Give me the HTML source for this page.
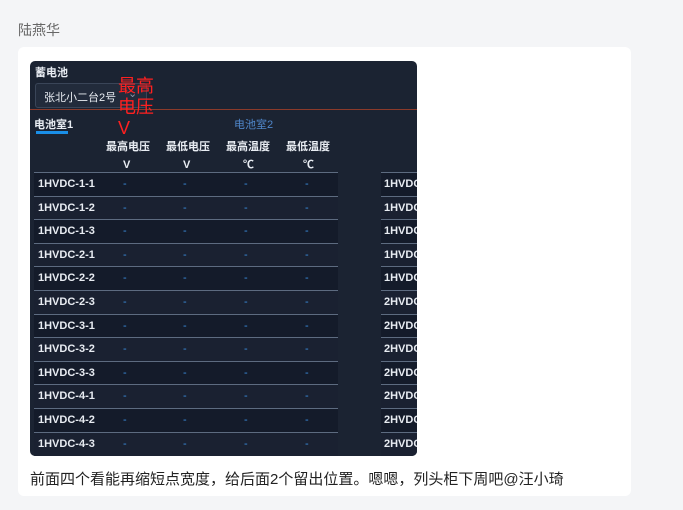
<!DOCTYPE html>
<html><head><meta charset="utf-8"><style>
body{margin:0;width:683px;height:510px;background:#f4f5f7;font-family:"Liberation Sans","Noto Sans CJK SC",sans-serif;position:relative;overflow:hidden}
.name{position:absolute;left:18px;top:20px;font-size:14px;color:#666}
.card{position:absolute;left:18px;top:47px;width:613px;height:449px;background:#fff;border-radius:6px}
.img{position:absolute;left:30px;top:61px;width:387px;height:395px;background:#1b2332;border-radius:5px;overflow:hidden;color:#e8ecf2;font-size:11px}
.abs{position:absolute}
.row{position:absolute;left:4px;width:304px;height:23px;border-top:1.5px solid #5d6b80;font-weight:bold;font-size:11px}
.row span{position:absolute;top:5px}
.d{color:#3b8ee0;font-weight:normal}
.r2{position:absolute;left:351px;width:40px;height:23px;border-top:1.5px solid #5d6b80;font-weight:bold;font-size:11px;overflow:hidden}
.r2 span{position:absolute;top:5px;left:3px}
.txt{position:absolute;left:30px;top:468px;font-size:15px;color:#222}
</style></head><body>
<div class="name">陆燕华</div>
<div class="card"></div>
<div class="img">
<div class="abs" style="left:5px;top:3px;font-weight:bold">蓄电池</div>
<div class="abs" style="left:5px;top:22px;width:110px;height:23px;border:1px solid #3a4558;border-radius:3px;background:#222b3b"><span style="position:absolute;left:8px;top:5px">张北小二台2号</span><span style="position:absolute;left:92px;top:3px;color:#8a94a6">⌄</span></div>
<div class="abs" style="left:0;top:48px;width:387px;height:1px;background:#8b3a2a"></div>
<div class="abs" style="left:88px;top:15px;color:#ff2020;font-size:18px;line-height:21px">最高<br>电压<br>V</div>
<div class="abs" style="left:4px;top:55px;font-weight:bold">电池室1</div>
<div class="abs" style="left:6px;top:70px;width:32px;height:3px;background:#1a8fe8"></div>
<div class="abs" style="left:204px;top:55px;color:#4f86c9">电池室2</div>
<div class="abs" style="left:76px;top:78px;width:240px;line-height:17px;font-weight:bold">
<span class="abs" style="left:0">最高电压</span><span class="abs" style="left:60px">最低电压</span><span class="abs" style="left:120px">最高温度</span><span class="abs" style="left:180px">最低温度</span>
<span class="abs" style="left:17px;top:18px">V</span><span class="abs" style="left:77px;top:18px">V</span><span class="abs" style="left:137px;top:18px">℃</span><span class="abs" style="left:197px;top:18px">℃</span></div>
<div id="rows"></div>
</div>
<div class="txt">前面四个看能再缩短点宽度，给后面2个留出位置。嗯嗯，列头柜下周吧@汪小琦</div>
<script>
var names=["1HVDC-1-1","1HVDC-1-2","1HVDC-1-3","1HVDC-2-1","1HVDC-2-2","1HVDC-2-3","1HVDC-3-1","1HVDC-3-2","1HVDC-3-3","1HVDC-4-1","1HVDC-4-2","1HVDC-4-3"];
var r2=["1HVDC","1HVDC","1HVDC","1HVDC","1HVDC","2HVDC","2HVDC","2HVDC","2HVDC","2HVDC","2HVDC","2HVDC"];
var h="";
for(var i=0;i<12;i++){var t=111+i*23.6;var bg=i%2?"#1a2131":"#141b2a";
h+='<div class="row" style="top:'+t+'px;background:'+bg+'"><span style="left:4px">'+names[i]+'</span><span class="d" style="left:89px">-</span><span class="d" style="left:149px">-</span><span class="d" style="left:210px">-</span><span class="d" style="left:271px">-</span></div>';
h+='<div class="r2" style="top:'+t+'px;background:'+bg+'"><span>'+r2[i]+'</span></div>';}
document.getElementById("rows").outerHTML=h;
</script>
</body></html>
